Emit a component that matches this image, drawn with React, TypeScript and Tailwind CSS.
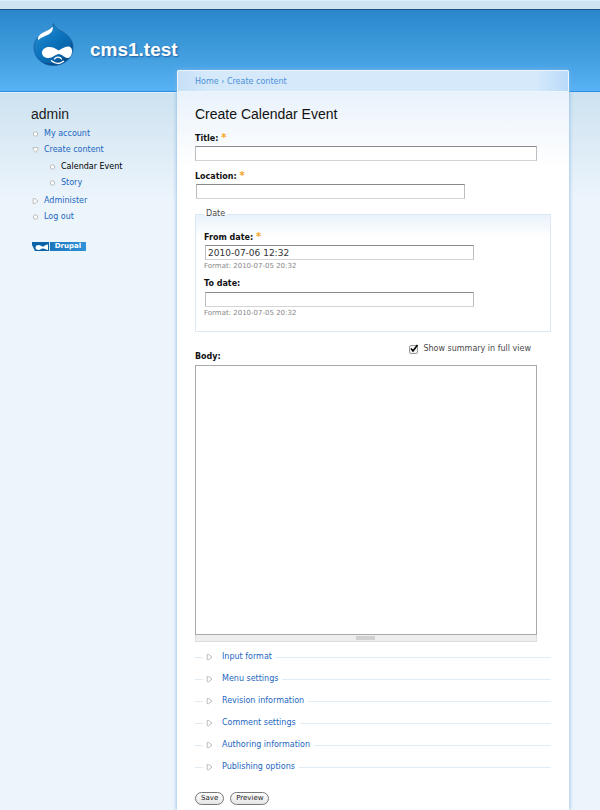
import { useState } from "react";

const sections = [
    "Input format",
    "Menu settings",
    "Revision information",
    "Comment settings",
    "Authoring information",
    "Publishing options",
];

const inputClass =
    "block h-[15px] rounded-none border border-t-[#8a8a8a] border-l-[#bdbdbd] border-r-[#bdbdbd] border-b-[#d4d4d4] bg-white px-0.5 text-[9px] leading-3 text-[#333] outline-none";

function DrupalLogo() {
    return (
        <svg width="42" height="45" viewBox="0 0 42 45" aria-hidden="true">
            <defs>
                <linearGradient id="drop" x1="0" y1="0" x2="0.8" y2="1">
                    <stop offset="0" stopColor="#2f93d6" />
                    <stop offset="0.5" stopColor="#0c74bd" />
                    <stop offset="1" stopColor="#08589b" />
                </linearGradient>
            </defs>
            <path
                d="M20.500 0.500c1 3.500 3.500 5.500 7.500 7.500C35 11.500 40 17 40 24.500 40 35 31.500 42.500 20.500 42.500S1 35 1 24.500C1 17.500 5 13 11 9.500 15.500 7 19.500 5 20.500.500z"
                fill="url(#drop)"
                stroke="#155f9f"
                strokeWidth="0.8"
            />
            <path
                d="M38.500 17.500c3 9-.500 18-8 22-6 3.500-14.500 3.500-20 .500 8 .500 16-1.500 21-6.500 4.500-4.500 7-10 7-16z"
                fill="#064077"
                opacity="0.5"
            />
            <path
                d="M19.500 3.500c1 3-.500 6-4 8C11.500 13.500 8 14 5.500 17c-1.500-1.500 0-4.500 3-6.500C12 8 16.500 7.500 19.500 3.500z"
                fill="#fff"
            />
            <path
                d="M16 24c4 0 7 1.800 9.500 3.500 3-1.500 6-4 9.500-4 3 0 4.500 2.500 4 5.500-.500 3.500-2 6-4.500 6-3 0-5.500-4-8.500-4-3.500 0-6 4-10.500 4S9 32.500 9 29.500 12 24 16 24z"
                fill="#fff"
            />
            <path
                d="M21.500 36c1.500-2.300 5.500-2.600 7 0M18.500 37.800c3.500 3.500 8.500 3.500 12 .400"
                fill="none"
                stroke="#fff"
                strokeWidth="1.300"
                strokeLinecap="round"
            />
        </svg>
    );
}

function Bullet({ type }: { type: "leaf" | "open" | "closed" }) {
    return (
        <svg
            className="shrink-0"
            width="7"
            height="7"
            viewBox="0 0 7 7"
            fill="#fff"
            stroke="#b4b4b4"
            strokeWidth="0.9"
            aria-hidden="true"
        >
            {type === "leaf" && <circle cx="3.500" cy="3" r="2.200" />}
            {type === "open" && <path d="M1 0.700h5.200v1.500L3.600 5.500 1 2.200z" />}
            {type === "closed" && <path d="M1.200 0.500h1.500L6 3.100 2.700 5.700H1.200z" />}
        </svg>
    );
}

function MenuItem({ type, label, active }: any) {
    return (
        <div className="flex h-4 items-center gap-[5px]">
            <Bullet type={type} />
            <a href="#" className={active ? "text-black" : "text-[#1c66c0]"}>
                {label}
            </a>
        </div>
    );
}

function Label({ htmlFor, text, required }: any) {
    return (
        <label htmlFor={htmlFor} className="block h-3 leading-3 font-bold text-[#111]">
            {text}:{" "}
            {required && (
                <span className="text-[10px] text-[#f5a623]" title="This field is required.">
                    *
                </span>
            )}
        </label>
    );
}

export default function App() {
    const [summary, setSummary] = useState(true);
    const [from, setFrom] = useState("2010-07-06 12:32");

    return (
        <div className="flex min-h-screen flex-col bg-[#edf5fc] bg-[linear-gradient(#cde2f0,#edf5fc)] bg-[length:100%_110px] bg-[position:0_92px] bg-no-repeat font-['Verdana','DejaVu_Sans',sans-serif] text-[8px] leading-3 text-[#494949]">
            <header className="h-[92px] border-b border-[#2b8be0] bg-[linear-gradient(#2482c6,#3f9bdc_55%,#58b2f5)]">
                <div className="h-[10px] border-t border-b border-t-[#dceffc] border-b-[#1c4f86] bg-[#cee3f1]" />
                <a href="#" className="flex items-center gap-[15px] pt-[13px] pl-[33px]">
                    <DrupalLogo />
                    <h1 className="pt-2 font-['Liberation_Sans',Arial,sans-serif] text-[19px] leading-6 font-bold text-white [text-shadow:1px_1px_2px_#1b5d9c]">
                        cms1.test
                    </h1>
                </a>
            </header>

            <div className="flex flex-1">
                <aside className="w-[177px] shrink-0 border-t border-[#e3f2fc] pt-[13px] pl-[31px]">
                    <h2 className="font-['Liberation_Sans',Arial,sans-serif] text-[14px] leading-4 text-[#222]">
                        admin
                    </h2>
                    <nav className="pt-1 pl-px">
                        <MenuItem type="leaf" label="My account" />
                        <MenuItem type="open" label="Create content" />
                        <div className="pt-px pb-0.5 pl-[17px]">
                            <MenuItem type="leaf" label="Calendar Event" active />
                            <MenuItem type="leaf" label="Story" />
                        </div>
                        <MenuItem type="closed" label="Administer" />
                        <MenuItem type="leaf" label="Log out" />
                    </nav>
                    <a
                        href="#"
                        className="mt-[17px] ml-px flex h-[9px] w-[54px] items-center bg-[linear-gradient(90deg,#1668ae,#2f92d8)] text-[7px] leading-[9px] font-bold text-white"
                    >
                        <svg width="18" height="9" viewBox="0 0 18 9" aria-hidden="true">
                            <path d="M0 0h17v9H0z" fill="#0b62a8" />
                            <path d="M0 3l3 6H0z" fill="#edf5fc" />
                            <path
                                d="M6.500 3c2 0 3 1.200 4.500 1.800C12.500 4 14 2.500 16 2.500v5.500c-2 0-3-1.500-5-1.500S8.500 8 6.500 8 3.500 7 3.500 5.500 4.500 3 6.500 3z"
                                fill="#fff"
                            />
                            <path d="M17 0h1v9h-1z" fill="#cfe6f7" />
                        </svg>
                        <span className="flex-1 text-center">Drupal</span>
                    </a>
                </aside>

                <main className="-mt-[22px] mr-[31px] min-w-0 flex-1 rounded-t-[2px] bg-white bg-[linear-gradient(#e9f2fb,#ffffff)] bg-[length:100%_75px] bg-[position:0_22px] bg-no-repeat shadow-[0_0_4px_#7fb2e0]">
                    <div className="h-[22px] rounded-t-[2px] border border-[#eaf5fe] bg-[linear-gradient(90deg,#c6e0f7,#d5e9fa_8%,#d5e9fa_92%,#b9dafa)] pt-[5px] pl-[17px] text-[#4a90d9]">
                        <a href="#">Home</a> › <a href="#">Create content</a>
                    </div>

                    <form className="px-[18px] pt-3.5 pb-1.5" onSubmit={(e) => e.preventDefault()}>
                        <h2 className="font-['Liberation_Sans',Arial,sans-serif] text-[14px] leading-4 text-[#111]">
                            Create Calendar Event
                        </h2>

                        <div className="pt-[10px]">
                            <Label htmlFor="title" text="Title" required />
                            <input id="title" className={`${inputClass} mt-0.5 w-[96%]`} />
                        </div>
                        <div className="pt-[9px]">
                            <Label htmlFor="location" text="Location" required />
                            <input id="location" className={`${inputClass} mt-0.5 ml-px w-[269px]`} />
                        </div>

                        <fieldset className="mt-[9px] border border-[#dce9f5] bg-[linear-gradient(#e9f2fb,#ffffff)] bg-[length:100%_22px] bg-no-repeat px-2 pb-3">
                            <legend className="px-0.5">Date</legend>
                            <div className="pt-[11px]">
                                <Label htmlFor="from" text="From date" required />
                                <input
                                    id="from"
                                    className={`${inputClass} mt-0.5 ml-px w-[269px]`}
                                    value={from}
                                    onChange={(e) => setFrom(e.target.value)}
                                />
                                <div className="text-[7px] text-[#888]">Format: 2010-07-05 20:32</div>
                            </div>
                            <div className="pt-1.5">
                                <Label htmlFor="to" text="To date" />
                                <input id="to" className={`${inputClass} mt-0.5 ml-px w-[269px]`} />
                                <div className="text-[7px] text-[#888]">Format: 2010-07-05 20:32</div>
                            </div>
                        </fieldset>

                        <label className="mt-[11px] mr-5 flex h-3 items-center justify-end gap-[5px]">
                            <span className="relative flex">
                                <input
                                    type="checkbox"
                                    className="size-[9px] appearance-none rounded-[2px] border border-[#999] bg-[#f4f4f4]"
                                    checked={summary}
                                    onChange={(e) => setSummary(e.target.checked)}
                                />
                                {summary && (
                                    <svg
                                        className="pointer-events-none absolute -top-px left-0"
                                        width="10"
                                        height="10"
                                        viewBox="0 0 10 10"
                                        aria-hidden="true"
                                    >
                                        <path d="M2 4.500l2 2.500L8.500 1" fill="none" stroke="#000" strokeWidth="1.600" />
                                    </svg>
                                )}
                            </span>
                            Show summary in full view
                        </label>

                        <div className="-mt-1">
                            <Label htmlFor="body" text="Body" />
                            <textarea
                                id="body"
                                className="mt-0.5 block h-[270px] w-[96%] resize-none border border-[#a9a9a9] bg-white p-1 text-[9px] outline-none"
                            />
                            <div className="flex h-[7px] w-[96%] items-center justify-center border border-t-0 border-[#ddd] bg-[#eee]">
                                <div className="h-1 w-[19px] bg-[#d0d0d0]" />
                            </div>
                        </div>

                        {/* collapsed fieldsets */}
                        <div className="pt-[9px]">
                            {sections.map((section) => (
                                <fieldset key={section} className="h-[22px] border-t border-[#dfebf5]">
                                    <legend className="ml-2 pr-1 pl-[3px]">
                                        <a href="#" className="flex items-center gap-[9px] text-[#1c66c0]">
                                            <Bullet type="closed" />
                                            {section}
                                        </a>
                                    </legend>
                                </fieldset>
                            ))}
                        </div>

                        <div className="flex gap-1.5 pt-[9px] text-[7px] text-[#222]">
                            {["Save", "Preview"].map((name) => (
                                <button
                                    key={name}
                                    className="h-[13px] rounded-full border border-[#777] bg-[linear-gradient(#ffffff,#e4e4e4)] px-[5px] leading-[11px]"
                                >
                                    {name}
                                </button>
                            ))}
                        </div>
                    </form>
                </main>
            </div>
        </div>
    );
}
